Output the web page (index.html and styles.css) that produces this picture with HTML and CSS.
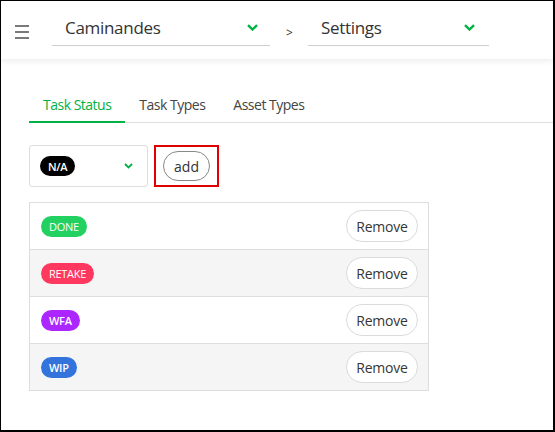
FILE: index.html
```html
<!DOCTYPE html>
<html>
<head>
<meta charset="utf-8">
<link rel="stylesheet" href="styles.css">
</head>
<body>
<div class="frame">
  <header class="topbar">
    <button class="burger" aria-label="menu">
      <svg width="14" height="14" viewBox="0 0 14 14"><rect x="0" y="0" width="14" height="2" fill="#7a7a7a"/><rect x="0" y="6" width="14" height="2" fill="#7a7a7a"/><rect x="0" y="12" width="14" height="2" fill="#7a7a7a"/></svg>
    </button>
    <div class="combo combo-prod">
      <span class="combo-text">Caminandes</span>
      <svg class="chev" width="11" height="7" viewBox="0 0 11 7"><path d="M1 1.2 L5.5 5.5 L10 1.2" fill="none" stroke="#00b242" stroke-width="2.4"/></svg>
    </div>
    <span class="sep">&gt;</span>
    <div class="combo combo-section">
      <span class="combo-text">Settings</span>
      <svg class="chev" width="11" height="7" viewBox="0 0 11 7"><path d="M1 1.2 L5.5 5.5 L10 1.2" fill="none" stroke="#00b242" stroke-width="2.4"/></svg>
    </div>
  </header>

  <main class="content">
    <nav class="tabs">
      <span class="tab active">Task Status</span>
      <span class="tab">Task Types</span>
      <span class="tab">Asset Types</span>
    </nav>

    <div class="add-row">
      <div class="status-select">
        <span class="badge badge-na">N/A</span>
        <svg class="chev-sm" width="9" height="6" viewBox="0 0 9 6"><path d="M1 1 L4.5 4.5 L8 1" fill="none" stroke="#00b242" stroke-width="1.8"/></svg>
      </div>
      <div class="highlight">
        <button class="pill-btn">add</button>
      </div>
    </div>

    <div class="list">
      <div class="row">
        <span class="badge badge-done">DONE</span>
        <button class="remove-btn">Remove</button>
      </div>
      <div class="row alt">
        <span class="badge badge-retake">RETAKE</span>
        <button class="remove-btn">Remove</button>
      </div>
      <div class="row">
        <span class="badge badge-wfa">WFA</span>
        <button class="remove-btn">Remove</button>
      </div>
      <div class="row alt">
        <span class="badge badge-wip">WIP</span>
        <button class="remove-btn">Remove</button>
      </div>
    </div>
  </main>
</div>
</body>
</html>
```

FILE: styles.css
```css
* { box-sizing: border-box; }
html, body { margin: 0; padding: 0; background: #fff; }
body {
  font-family: "Open Sans", "Noto Sans", sans-serif;
  color: #363636;
}
.frame {
  width: 555px;
  height: 432px;
  border-left: 1px solid #000;
  border-top: 1px solid #000;
  border-right: 2px solid #000;
  border-bottom: 2px solid #000;
  overflow: hidden;
}
.topbar {
  height: 58px;
  display: flex;
  align-items: flex-start;
  box-shadow: 0 2px 6px rgba(0,0,0,0.08);
  position: relative;
}
.burger {
  border: 0;
  background: none;
  padding: 0;
  margin: 24px 0 0 14px;
  width: 14px;
  height: 14px;
  display: block;
}
.burger svg { display: block; }
.combo {
  display: flex;
  align-items: center;
  height: 45px;
  border-bottom: 1px solid #cfcfcf;
  padding-top: 8px;
}
.combo-prod {
  margin-left: 23px;
  width: 218px;
  padding-left: 13px;
}
.combo-section {
  margin-left: 15px;
  width: 181px;
  padding-left: 13px;
}
.combo-text {
  font-size: 17px;
  color: #333;
  flex: 1;
  letter-spacing: -0.3px;
}
.combo-prod .chev { margin-right: 12px; }
.combo-section .chev { margin-right: 14px; }
.sep {
  font-size: 12px;
  margin: 23px 0 0 16px;
  color: #333;
}
.content {
  padding: 26px 0 0 28px;
}
.tabs {
  display: flex;
  border-bottom: 1px solid #ddd;
  height: 38px;
}
.tab {
  padding: 10px 14px 0;
  font-size: 14px;
  color: #444;
  letter-spacing: -0.5px;
}
.tab.active {
  color: #00b242;
  border-bottom: 2px solid #00b242;
  margin-bottom: -1px;
}
.add-row {
  display: flex;
  margin-top: 22px;
}
.status-select {
  width: 119px;
  height: 42px;
  border: 1px solid #ddd;
  border-radius: 3px;
  display: flex;
  align-items: center;
  padding-left: 10px;
}
.chev-sm { margin-left: 49px; }
.badge {
  display: inline-flex;
  align-items: center;
  height: 21px;
  padding: 0 8px;
  border-radius: 11px;
  color: #fff;
  font-size: 11px;
  font-weight: 400;
  letter-spacing: -0.3px;
}
.badge-na { background: #000; height: 20px; padding: 0 8px; font-weight: 600; }
.badge-done { background: #22d160; }
.badge-retake { background: #ff3860; }
.badge-wfa { background: #ab26ff; font-weight: 600; }
.badge-wip { background: #3273dc; font-weight: 600; }
.highlight {
  margin-left: 6px;
  width: 65px;
  height: 42px;
  border: 2px solid #e00000;
  display: flex;
  align-items: center;
  padding-left: 7px;
}
.pill-btn {
  width: 47px;
  height: 30px;
  border: 1px solid #888;
  border-radius: 15px;
  background: #fff;
  font-family: inherit;
  font-size: 14px;
  color: #333;
  padding: 0;
}
.list {
  margin-top: 15px;
  width: 400px;
  border: 1px solid #ddd;
}
.row {
  height: 47px;
  display: flex;
  align-items: center;
  justify-content: space-between;
  padding: 0 10px 0 11px;
  border-top: 1px solid #ddd;
  background: #fff;
}
.row:first-child { border-top: 0; height: 46px; }
.row.alt { background: #f5f5f5; }
.remove-btn {
  width: 72px;
  height: 32px;
  border: 1px solid #dbdbdb;
  border-radius: 16px;
  background: #fff;
  font-family: inherit;
  font-size: 14px;
  color: #363636;
  padding: 0;
  letter-spacing: -0.2px;
}
```
